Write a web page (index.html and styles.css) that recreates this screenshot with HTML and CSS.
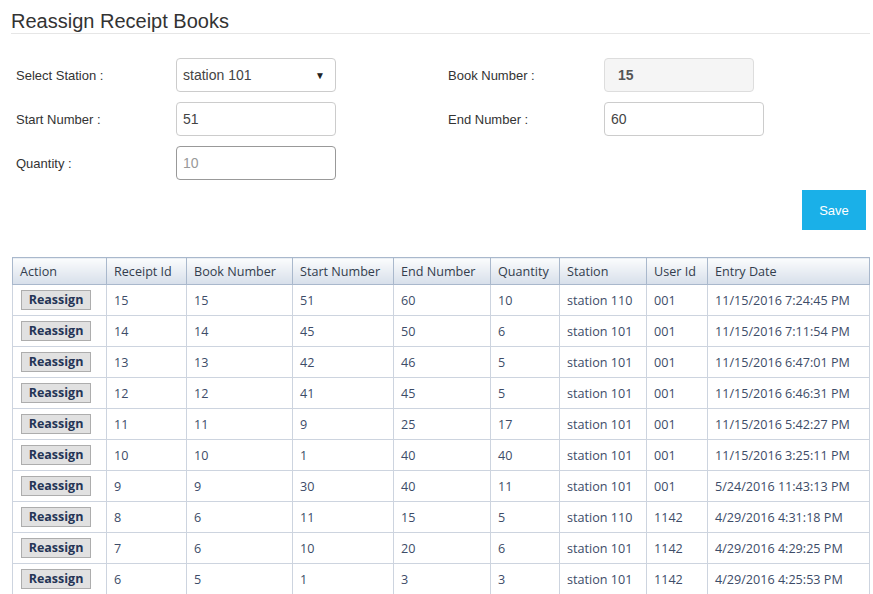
FILE: index.html
```html
<!DOCTYPE html>
<html>
<head>
<meta charset="utf-8">
<link rel="stylesheet" href="styles.css">
</head>
<body>
<div class="page">
  <h1 class="title">Reassign Receipt Books</h1>
  <div class="form">
    <div class="col">
      <div class="row">
        <label class="lbl">Select Station :</label>
        <div class="field select"><span>station 101</span><span class="caret">&#9660;</span></div>
      </div>
      <div class="row">
        <label class="lbl">Start Number :</label>
        <div class="field">51</div>
      </div>
      <div class="row">
        <label class="lbl">Quantity :</label>
        <div class="field focus placeholder">10</div>
      </div>
    </div>
    <div class="col col2">
      <div class="row">
        <label class="lbl">Book Number :</label>
        <div class="field readonly">15</div>
      </div>
      <div class="row">
        <label class="lbl">End Number :</label>
        <div class="field">60</div>
      </div>
    </div>
  </div>
  <div class="actions"><button class="save">Save</button></div>
  <table class="grid">
    <colgroup>
      <col class="c1"><col class="c2"><col class="c3"><col class="c4"><col class="c5"><col class="c6"><col class="c7"><col class="c8"><col>
    </colgroup>
    <thead>
      <tr><th>Action</th><th>Receipt Id</th><th>Book Number</th><th>Start Number</th><th>End Number</th><th>Quantity</th><th>Station</th><th>User Id</th><th>Entry Date</th></tr>
    </thead>
    <tbody>
      <tr><td><button class="re">Reassign</button></td><td>15</td><td>15</td><td>51</td><td>60</td><td>10</td><td>station 110</td><td>001</td><td>11/15/2016 7:24:45 PM</td></tr>
      <tr><td><button class="re">Reassign</button></td><td>14</td><td>14</td><td>45</td><td>50</td><td>6</td><td>station 101</td><td>001</td><td>11/15/2016 7:11:54 PM</td></tr>
      <tr><td><button class="re">Reassign</button></td><td>13</td><td>13</td><td>42</td><td>46</td><td>5</td><td>station 101</td><td>001</td><td>11/15/2016 6:47:01 PM</td></tr>
      <tr><td><button class="re">Reassign</button></td><td>12</td><td>12</td><td>41</td><td>45</td><td>5</td><td>station 101</td><td>001</td><td>11/15/2016 6:46:31 PM</td></tr>
      <tr><td><button class="re">Reassign</button></td><td>11</td><td>11</td><td>9</td><td>25</td><td>17</td><td>station 101</td><td>001</td><td>11/15/2016 5:42:27 PM</td></tr>
      <tr><td><button class="re">Reassign</button></td><td>10</td><td>10</td><td>1</td><td>40</td><td>40</td><td>station 101</td><td>001</td><td>11/15/2016 3:25:11 PM</td></tr>
      <tr><td><button class="re">Reassign</button></td><td>9</td><td>9</td><td>30</td><td>40</td><td>11</td><td>station 101</td><td>001</td><td>5/24/2016 11:43:13 PM</td></tr>
      <tr><td><button class="re">Reassign</button></td><td>8</td><td>6</td><td>11</td><td>15</td><td>5</td><td>station 110</td><td>1142</td><td>4/29/2016 4:31:18 PM</td></tr>
      <tr><td><button class="re">Reassign</button></td><td>7</td><td>6</td><td>10</td><td>20</td><td>6</td><td>station 101</td><td>1142</td><td>4/29/2016 4:29:25 PM</td></tr>
      <tr><td><button class="re">Reassign</button></td><td>6</td><td>5</td><td>1</td><td>3</td><td>3</td><td>station 101</td><td>1142</td><td>4/29/2016 4:25:53 PM</td></tr>
    </tbody>
  </table>
</div>
</body>
</html>
```

FILE: styles.css
```css
* { box-sizing: border-box; }
html, body { margin: 0; padding: 0; background: #fff; }
body { font-family: "Liberation Sans", Arial, sans-serif; color: #333; }
.page { padding: 9px 3px 0 11px; }
.title {
  margin: 0;
  font-size: 20px;
  font-weight: normal;
  color: #333;
  line-height: 24px;
  border-bottom: 1px solid #e6e6e6;
  height: 25px;
}
.form { display: flex; padding: 24px 0 0 5px; }
.col { display: flex; flex-direction: column; gap: 10px; width: 432px; flex-shrink: 0; }
.col2 { flex: 1; width: auto; }
.row { display: flex; align-items: center; height: 34px; }
.lbl { width: 160px; font-size: 13px; color: #333; }
.col2 .lbl { width: 156px; }
.field {
  width: 160px; height: 34px;
  border: 1px solid #ccc; border-radius: 4px;
  padding: 0 6px;
  display: flex; align-items: center;
  font-size: 14px; color: #444;
}
.select { justify-content: space-between; padding-right: 10px; }
.caret { font-size: 10px; color: #222; }
.focus { border-color: #999; }
.placeholder { color: #999; }
.readonly { width: 150px; background: #f5f5f5; border-color: #ddd; font-weight: bold; color: #555; padding-left: 13px; }
.actions { display: flex; justify-content: flex-end; padding: 10px 4px 0 0; }
.save {
  width: 64px; height: 40px;
  background: #1ab0e8; color: #fff; border: none;
  font-family: "Liberation Sans", Arial, sans-serif; font-size: 13px;
}
.grid {
  margin-top: 27px;
  margin-left: 1px;
  width: 858px;
  border-collapse: collapse;
  table-layout: fixed;
  font-family: "Open Sans", "Noto Sans", sans-serif;
  font-size: 12.6px;
}
.c1 { width: 94px; }
.c2 { width: 80px; }
.c3 { width: 106px; }
.c4 { width: 101px; }
.c5 { width: 97px; }
.c6 { width: 69px; }
.c7 { width: 87px; }
.c8 { width: 61px; }
.grid th {
  height: 27px;
  text-align: left;
  font-weight: normal;
  color: #333d4d;
  padding: 0 7px;
  background: linear-gradient(#fbfcfd, #d7dfea);
  border: 1px solid #a9b8cc;
  white-space: nowrap;
}
.grid td {
  height: 31px;
  padding: 0 7px;
  color: #3d4c68;
  border: 1px solid #cdd4df;
  white-space: nowrap;
}
.grid td:first-child { padding-left: 8px; }
.re {
  width: 70px; height: 20px;
  background: #e1e1e1;
  border: 1px solid #adadad;
  font-family: "Open Sans", "Noto Sans", sans-serif;
  font-weight: bold; font-size: 12.5px;
  color: #253556;
  padding: 0;
  line-height: 18px;
}
```
